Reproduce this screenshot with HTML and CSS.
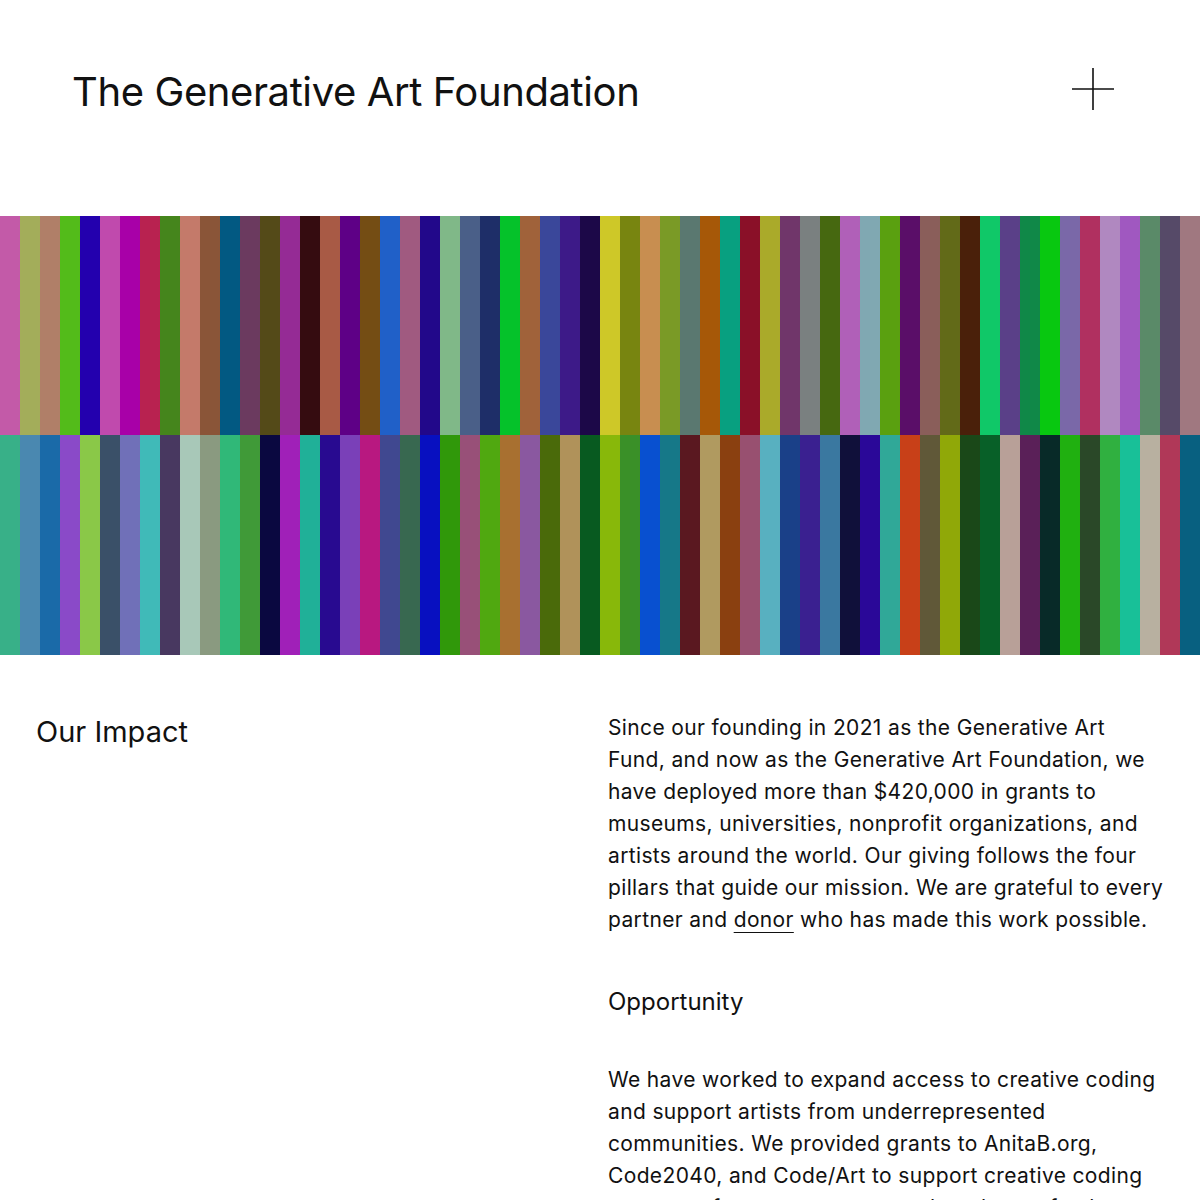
FILE: index.html
```html
<!DOCTYPE html>
<html lang="en">
<head>
<meta charset="utf-8">
<title>The Generative Art Foundation</title>
<link rel="stylesheet" href="styles.css">
</head>
<body>
<header class="site-header">
  <h1 class="site-title">The Generative Art Foundation</h1>
  <button class="menu-toggle" aria-label="Open menu">
    <svg width="42" height="42" viewBox="0 0 42 42" aria-hidden="true">
      <path d="M21 0V42M0 21H42" stroke="#111" stroke-width="1.6" fill="none"/>
    </svg>
  </button>
</header>

<div class="stripes" aria-hidden="true">
  <div class="stripe-row" id="row-a"></div>
  <div class="stripe-row" id="row-b"></div>
</div>

<section class="impact">
  <h2 class="impact-title">Our Impact</h2>
  <div class="impact-body">
    <p>Since our founding in 2021 as the Generative Art Fund, and now as the Generative Art Foundation, we have deployed more than $420,000 in grants to museums, universities, nonprofit organizations, and artists around the world. Our giving follows the four pillars that guide our mission. We are grateful to every partner and <a href="#">donor</a> who has made this work possible.</p>
    <h3 class="pillar">Opportunity</h3>
    <p>We have worked to expand access to creative coding and support artists from underrepresented communities. We provided grants to AnitaB.org, Code2040, and Code/Art to support creative coding programs for young women and students of color.</p>
  </div>
</section>

<script src="script.js"></script>
</body>
</html>
```

FILE: styles.css
```css
* { box-sizing: border-box; }

body {
  margin: 0;
  background: #fff;
  color: #111;
  font-family: Inter, "Liberation Sans", sans-serif;
}

.site-header {
  height: 184px;
  padding: 0 72px;
  display: flex;
  align-items: center;
  justify-content: space-between;
}

.site-title {
  margin: 0;
  font-size: 40px;
  font-weight: 400;
  letter-spacing: -0.01em;
  line-height: 1;
}

.menu-toggle {
  border: 0;
  background: none;
  padding: 0;
  margin-right: 14px;
  margin-top: -6px;
  display: flex;
  cursor: pointer;
}

.stripes {
  margin-top: 32px;
  display: flex;
  flex-direction: column;
}

.stripe-row {
  height: 220px;
  display: flex;
}

.stripe-row:first-child { height: 219px; }

.stripe {
  flex: 1 1 0;
}

.impact {
  display: grid;
  grid-template-columns: 1fr 1fr;
  column-gap: 16px;
  padding: 57px 36px 40px;
}

.impact-title {
  margin: 0;
  font-size: 29px;
  font-weight: 400;
  line-height: 40px;
}

.impact-body p {
  margin: 0;
  font-size: 21px;
  line-height: 32px;
  letter-spacing: 0.017em;
}

.impact-body a {
  color: inherit;
  text-decoration: underline;
  text-underline-offset: 5px;
  text-decoration-thickness: 1px;
}

.pillar {
  margin: 48px 0;
  font-size: 24px;
  font-weight: 400;
  line-height: 32px;
  position: relative;
  top: 2px;
}
```

FILE: script.js
```js
// Two rows of sixty vertical bands, one per palette entry.
const rowA = [
  "#c35aa8","#a3ad5a","#b07f68","#53bb1a","#2300ae","#c04aad","#a800a8","#b82250","#45851c","#c47a6a",
  "#8a5538","#025982","#6b3a5f","#544a18","#952b95","#350c10","#a85a45","#5e0086","#744d14","#2060c8",
  "#a05a80","#22088a","#80b888","#4a5f88","#1e2e68","#05c22a","#a0623a","#3a479a","#3d1a88","#1c0848",
  "#cec828","#788510","#c88e50","#7a9a26","#5a7870","#a65808","#08a080","#8a1028","#aaaa2a","#70366a",
  "#7a8080","#466810","#b060b8","#80a8b2","#5aa010","#5a0e68","#8a5e5a","#626a18","#4a200a","#10c868",
  "#5a4088","#108848","#08c810","#7a68a8","#b03060","#b088c0","#a058c0","#5a8a68","#564a68","#a07880"
];
const rowB = [
  "#38b088","#4a88b0","#1a6aa8","#8a4ac8","#8ac848","#3a5068","#7070b8","#40bab8","#483860","#a8c8b8",
  "#8a9a80","#30b878","#409a38","#0a0840","#a020b8","#20b098","#280a90","#7a40b8","#b81880","#404890",
  "#386850","#0810c0","#30980a","#985078","#50a810","#a87030","#8a58a0","#4a6a0a","#b0925a","#085a20",
  "#88b80a","#3a9028","#0850d0","#167888","#5a1820","#b09a60","#8a4010","#985070","#58b0c0","#1a4088",
  "#3a2090","#3a78a0","#10103a","#2a0898","#30a898","#c84018","#605838","#90a808","#1a4818","#086028",
  "#b8a098","#5a2058","#082a28","#20b010","#2a4828","#30b040","#18c098","#b8b0a0","#b03858","#086080"
];

function fill(id, colors) {
  const row = document.getElementById(id);
  colors.forEach((c) => {
    const s = document.createElement("div");
    s.className = "stripe";
    s.style.background = c;
    row.appendChild(s);
  });
}

fill("row-a", rowA);
fill("row-b", rowB);
```
